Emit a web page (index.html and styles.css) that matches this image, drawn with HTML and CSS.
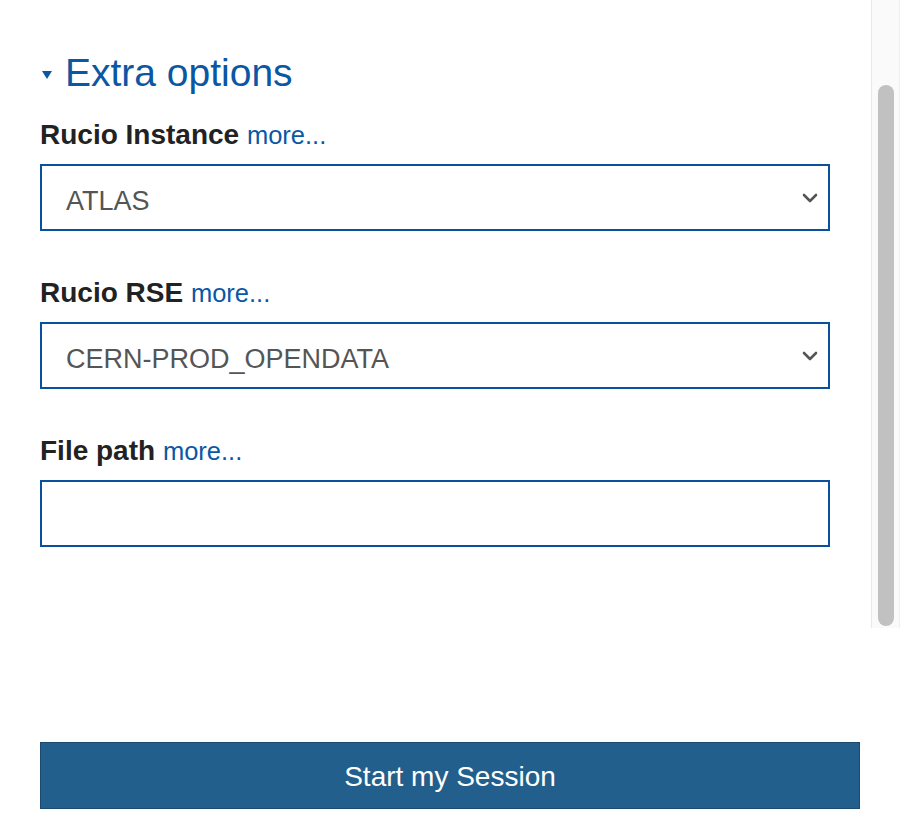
FILE: index.html
```html
<!DOCTYPE html>
<html lang="en">
<head>
<meta charset="utf-8">
<title>Extra options</title>
<link rel="stylesheet" href="styles.css">
</head>
<body>
<div class="page">
  <div class="pane">
    <div class="content">
      <h2 class="section-title">
        <svg class="caret" width="10" height="8" viewBox="0 0 10 8"><polygon points="0,0 10,0 5,8" fill="#0b57a4"/></svg>
        <span>Extra options</span>
      </h2>

      <div class="field">
        <label class="field-label">Rucio Instance <a class="more" href="#">more...</a></label>
        <div class="select-wrap">
          <select class="control select">
            <option>ATLAS</option>
          </select>
          <svg class="chevron" width="16" height="10" viewBox="0 0 16 10"><polyline points="2,2 8,8 14,2" fill="none" stroke="#555" stroke-width="2.6" stroke-linecap="round" stroke-linejoin="round"/></svg>
        </div>
      </div>

      <div class="field">
        <label class="field-label">Rucio RSE <a class="more" href="#">more...</a></label>
        <div class="select-wrap">
          <select class="control select">
            <option>CERN-PROD_OPENDATA</option>
          </select>
          <svg class="chevron" width="16" height="10" viewBox="0 0 16 10"><polyline points="2,2 8,8 14,2" fill="none" stroke="#555" stroke-width="2.6" stroke-linecap="round" stroke-linejoin="round"/></svg>
        </div>
      </div>

      <div class="field">
        <label class="field-label">File path <a class="more" href="#">more...</a></label>
        <input class="control" type="text">
      </div>
    </div>
    <div class="scrollbar"><div class="thumb"></div></div>
  </div>
  <div class="actions">
    <button class="primary" type="button">Start my Session</button>
  </div>
</div>
</body>
</html>
```

FILE: styles.css
```css
html, body {
  margin: 0;
  padding: 0;
  background: #ffffff;
}

body {
  font-family: "Liberation Sans", Arial, Helvetica, sans-serif;
  color: #222222;
}

.page {
  width: 900px;
}

.pane {
  display: flex;
  height: 628px;
}

.content {
  flex: 1;
  padding: 51px 41px 0 40px;
}

.section-title {
  display: flex;
  align-items: center;
  margin: 0 0 24px 0;
  font-size: 39px;
  line-height: 44px;
  font-weight: normal;
  color: #0b57a4;
}

.caret {
  margin-left: 2px;
  margin-right: 13px;
  margin-top: 3px;
  flex: none;
}

.field {
  margin-bottom: 46px;
}

.field-label {
  display: block;
  font-size: 28px;
  line-height: 32px;
  font-weight: bold;
  color: #222222;
  margin-bottom: 13px;
}

.more {
  font-weight: normal;
  font-size: 25.5px;
  color: #0b57a4;
  text-decoration: none;
}

.select-wrap {
  position: relative;
}

.control {
  display: block;
  box-sizing: border-box;
  width: 790px;
  height: 67px;
  margin: 0;
  border: 2px solid #0a519d;
  border-radius: 0;
  background: #ffffff;
  font-family: "Liberation Sans", Arial, Helvetica, sans-serif;
  font-size: 27px;
  color: #555555;
  padding: 6px 40px 0 24px;
  outline: none;
}

.select {
  -webkit-appearance: none;
  appearance: none;
}

.chevron {
  position: absolute;
  right: 12px;
  top: 29px;
  pointer-events: none;
}

.scrollbar {
  width: 29px;
  border-left: 1px solid #e9e9e9;
  border-right: 1px solid #efefef;
  background: #fafafa;
  padding: 85px 5px 2px 6px;
  box-sizing: border-box;
}

.thumb {
  width: 16px;
  height: 541px;
  border-radius: 8px;
  background: #c1c1c1;
}

.actions {
  padding: 114px 40px 0 40px;
}

.primary {
  display: block;
  box-sizing: border-box;
  width: 820px;
  height: 67px;
  margin: 0;
  border: 1px solid #1b4a70;
  border-radius: 0;
  background: #235f8c;
  color: #ffffff;
  font-family: "Liberation Sans", Arial, Helvetica, sans-serif;
  font-size: 28px;
  padding: 2px 0 0 0;
}
```
